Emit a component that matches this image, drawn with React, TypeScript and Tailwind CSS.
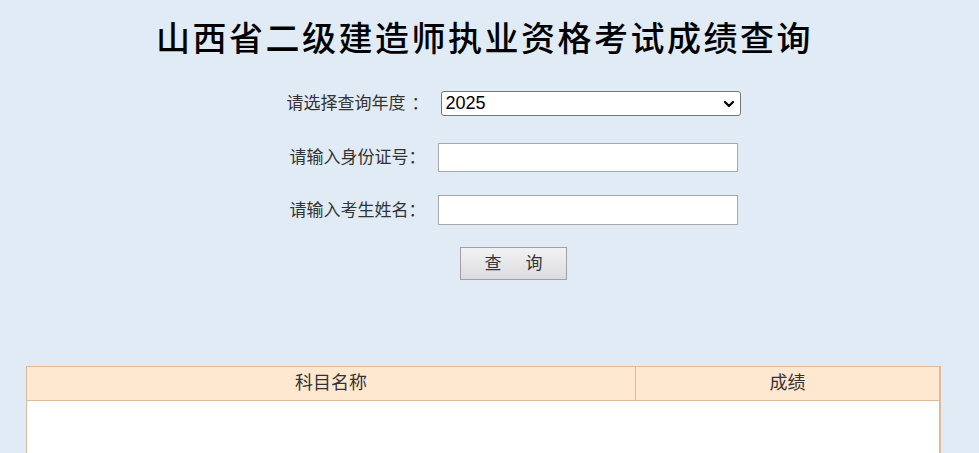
import { ChevronDown } from "lucide-react"

const cjk = { fontFamily: '"Liberation Serif", "Noto Sans CJK SC", serif' }

function FormRow({ label, labelW, children }: { label: React.ReactNode; labelW: string; children: React.ReactNode }) {
  return (
    <div className="flex items-center justify-center">
      <span className={`${labelW} text-[17px] text-[#333] leading-none whitespace-nowrap`} style={cjk}>{label}</span>
      {children}
    </div>
  )
}

export default function App() {
  return (
    <div className="w-[979px] h-[453px] bg-[#e0ebf5] overflow-hidden">
      <h1
        className="pt-[20px] pr-[10px] text-center text-[34px] font-medium leading-[40px] text-black tracking-[2.5px]"
        style={cjk}
      >
        山西省二级建造师执业资格考试成绩查询
      </h1>

      <div className="pl-[48px] mt-[31px] flex flex-col">
        <FormRow label={<>请选择查询年度<span className="ml-[6px]">：</span></>} labelW="w-[154px]">
          <div className="relative w-[300px] h-[25px] bg-white border border-[#767676] rounded-[3px] flex items-center">
            <span className="pl-[4px] text-[18px] text-black" style={{ fontFamily: '"Liberation Sans", Arial, sans-serif' }}>2025</span>
            <ChevronDown className="absolute right-[3px] top-[4px] w-[16px] h-[16px] text-black" strokeWidth={3.2} />
          </div>
        </FormRow>

        <div className="mt-[27px]">
          <FormRow label="请输入身份证号：" labelW="w-[148px]">
            <input className="w-[300px] h-[29px] bg-white border border-[#a9a9a9] outline-none" />
          </FormRow>
        </div>

        <div className="mt-[23px]">
          <FormRow label="请输入考生姓名：" labelW="w-[148px]">
            <input className="w-[300px] h-[30px] bg-white border border-[#a9a9a9] outline-none" />
          </FormRow>
        </div>

        <div className="mt-[22px] flex justify-center">
          <button
            className="w-[107px] h-[33px] border border-[#a0a0a0] bg-gradient-to-b from-[#f2f2f4] to-[#dcdce0] text-[17px] text-[#333] flex items-center justify-center gap-[24px] leading-none"
            style={cjk}
          >
            <span>查</span>
            <span>询</span>
          </button>
        </div>
      </div>

      <div className="mt-[86px] ml-[26px] w-[915px] border border-r-2 border-[#deb99b] bg-white h-[100px]">
        <div className="flex h-[34px] bg-[#ffe8cf] border-b border-[#deb99b] text-[18px] text-[#333]" style={cjk}>
          <div className="w-[609px] flex items-center justify-center border-r border-[#deb99b]">科目名称</div>
          <div className="flex-1 flex items-center justify-center">成绩</div>
        </div>
      </div>
    </div>
  )
}
